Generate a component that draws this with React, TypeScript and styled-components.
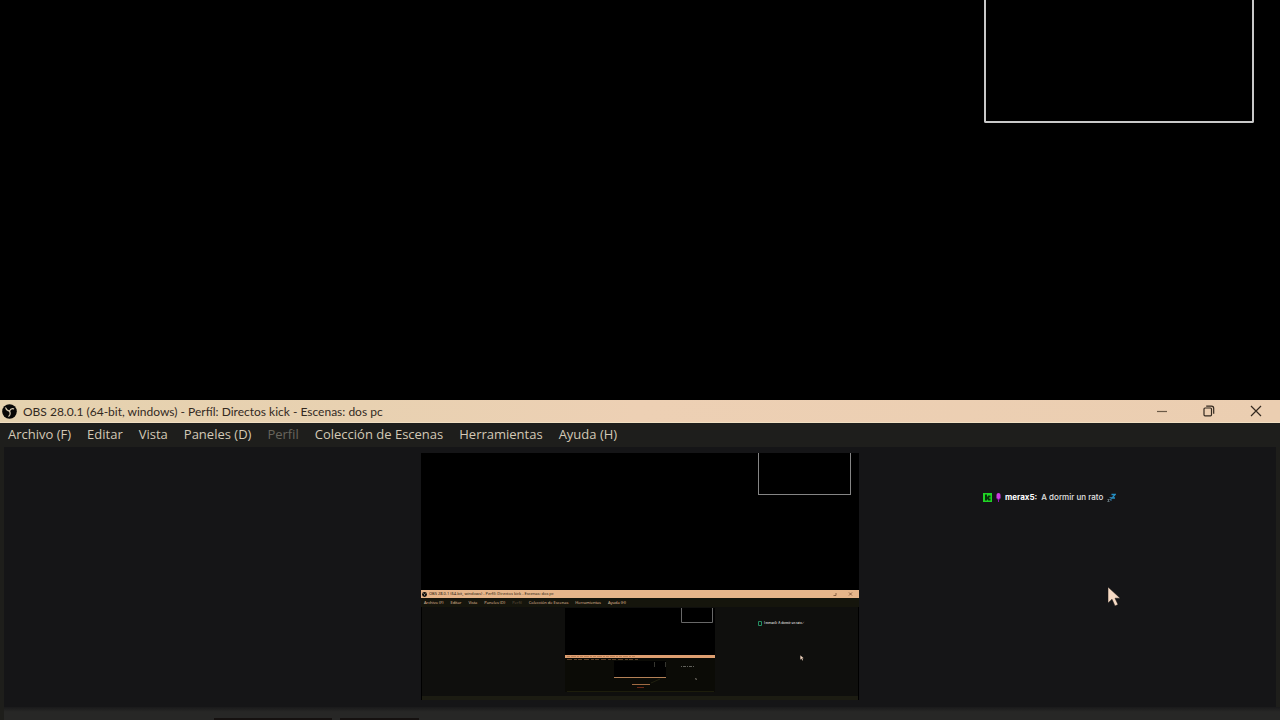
import React from "react";
import styled, { createGlobalStyle } from "styled-components";

const GlobalStyle = createGlobalStyle`
  * { box-sizing: border-box; }
  body { margin: 0; background: #000; overflow: hidden; font-family: "Noto Sans", "Open Sans", sans-serif; }
  button { font: inherit; border: 0; padding: 0; background: none; color: inherit; }
`;

const Page = styled.div`
  position: relative;
  min-height: 100vh;
  display: flex;
  flex-direction: column;
  background: #000;
`;

const Stage = styled.main`
  flex: 1;
  display: flex;
  justify-content: flex-end;
  align-items: flex-start;
  padding-right: 26px;
`;

const SourceFrame = styled.div`
  width: 270px;
  height: 123px;
  border: 2px solid #c9c9c9;
  border-top: 0;
  border-radius: 0 0 2px 2px;
`;

const ObsWindow = styled.section`
  background: #1e1e1b;
`;

const TitleBar = styled.header`
  height: 23px;
  display: flex;
  align-items: center;
  gap: 6px;
  padding: 0 1px 0 2px;
  color: #33291f;
  background: linear-gradient(90deg, #e5d2af 0%, #e8d1b1 28%, #edd0b4 50%, #ebceb1 100%);
  border-bottom: 1px solid #f1dfc2;
`;

const Title = styled.h1`
  flex: 1;
  margin: 0;
  padding-top: 2px;
  font-family: Lato, "Open Sans", sans-serif;
  font-size: 12px;
  line-height: 20px;
  font-weight: 400;
  white-space: nowrap;
`;

const WindowControls = styled.div`
  display: flex;
`;

const WindowButton = styled.button`
  width: 47px;
  height: 22px;
  display: grid;
  place-items: center;
`;

const MenuBar = styled.nav`
  height: 24px;
  display: flex;
  align-items: flex-start;
  gap: 16px;
  padding: 0 8px;
  color: #d4c9b6;
  background: #1e1e1c;
`;

const MenuButton = styled.button<{ $dim?: boolean }>`
  font-family: "Open Sans", sans-serif;
  font-size: 13px;
  line-height: 22px;
  white-space: nowrap;
  color: ${(p) => (p.$dim ? "#69655d" : "inherit")};
`;

const Workspace = styled.div`
  margin: 0 4px;
  height: 260px;
  display: grid;
  grid-template-columns: 1fr 438px 1fr;
  padding-top: 6px;
  background: #151517;
`;

const ChatArea = styled.div`
  grid-column: 3;
  padding: 37px 0 0 124px;
`;

const ChatLine = styled.p`
  margin: 0;
  display: flex;
  align-items: center;
  gap: 4px;
  font: 500 8px/14px Inter, sans-serif;
  color: #e2e2e2;
  white-space: nowrap;
`;

const ChatName = styled.strong`
  font-weight: 700;
  color: #fff;
`;

const DockStrip = styled.footer`
  height: 13px;
  display: flex;
  align-items: flex-end;
  gap: 8px;
  margin-left: 4px;
  padding-left: 210px;
  background: linear-gradient(#1a1a1b, #272726 5px);
`;

const DockEdge = styled.div<{ $width: number }>`
  width: ${(p) => p.$width}px;
  height: 2px;
  background: #151110;
`;

/* Scaled capture of the desktop that the preview shows */
const Capture = styled.div`
  grid-column: 2;
  height: 247px;
  display: flex;
  flex-direction: column;
  background: #000;
`;

const CaptureStage = styled.div`
  height: 137px;
  display: flex;
  justify-content: flex-end;
  align-items: flex-start;
  padding-right: 8px;
`;

const CaptureFrame = styled.div`
  width: 93px;
  height: 42px;
  border: 1px solid #858585;
  border-top: 0;
`;

const CaptureTitle = styled.div`
  height: 8px;
  display: flex;
  align-items: center;
  gap: 2px;
  padding: 0 5px 0 1px;
  background: #e6b58a;
  color: #24160a;
  font-size: 4px;
  line-height: 8px;
  white-space: nowrap;
`;

const CaptureTitleText = styled.span`
  flex: 1;
`;

const CaptureMenu = styled.div`
  height: 9px;
  display: flex;
  align-items: center;
  gap: 7px;
  padding-left: 3px;
  background: #15150c;
  color: #e8c4a0;
  font-family: "Open Sans", sans-serif;
  font-size: 4px;
  line-height: 8px;
  white-space: nowrap;
`;

const CaptureLabel = styled.span<{ $dim?: boolean }>`
  font-weight: 500;
  color: ${(p) => (p.$dim ? "#645743" : "inherit")};
`;

const CaptureBody = styled.div`
  flex: 1;
  display: grid;
  grid-template-columns: 1fr 150px 1fr;
  margin: 0 1px;
  padding-top: 1px;
  background: #0f0f0d;
`;

const CaptureChat = styled.div`
  grid-column: 3;
  display: flex;
  align-items: center;
  gap: 1px;
  height: 6px;
  margin-top: 12px;
  padding-left: 43px;
  color: #ddd;
  font: 600 3px/6px Inter, sans-serif;
  white-space: nowrap;
`;

const CaptureFoot = styled.div`
  height: 4px;
  margin: 0 1px;
  background: #1c1c12;
`;

const NestedArt = styled.svg`
  grid-column: 2;
  display: block;
`;

const Pointer = styled.svg<{ $small?: boolean }>`
  position: absolute;
  left: ${(p) => (p.$small ? "calc(50% + 160px)" : "calc(50% + 467px)")};
  bottom: ${(p) => (p.$small ? 59 : 113)}px;
  pointer-events: none;
`;

const MENUS = ["Archivo (F)", "Editar", "Vista", "Paneles (D)", "Perfil", "Colección de Escenas", "Herramientas", "Ayuda (H)"];
const TITLE = "OBS 28.0.1 (64-bit, windows) - Perfíl: Directos kick - Escenas: dos pc";

const ObsLogo = ({ size }: { size: number }) => (
  <svg width={size} height={size} viewBox="0 0 16 16" aria-hidden="true">
    <circle cx="8" cy="8" r="7.8" fill="#080706" />
    <g fill="none" stroke="#d8cab0" strokeWidth="1.3" strokeLinecap="round">
      <path d="M4 4.200C4.600 6.300 6 7.300 8 7.600" />
      <path d="M12.400 5.200C10.800 4.800 8.800 5.600 8 7.600" />
      <path d="M7.200 13C8.800 11.800 9 9.600 8 7.600" />
    </g>
  </svg>
);

const PointerShape = () => (
  <path d="M1 0v16l4-3.8L8 19l3-1.4-3-6.4h5.2z" fill="#f6dac4" stroke="#1b1714" strokeWidth=".5" />
);

const PreviewCapture = () => (
  <Capture>
    <CaptureStage><CaptureFrame /></CaptureStage>
    <CaptureTitle>
      <ObsLogo size={5} />
      <CaptureTitleText>{TITLE}</CaptureTitleText>
      <svg width="22" height="6" viewBox="0 0 22 6" fill="none" stroke="#714d32" strokeWidth=".8" aria-hidden="true">
        <path d="M1.500 4.500h2.500V2M17 1.500l3 3M20 1.500l-3 3" />
      </svg>
    </CaptureTitle>
    <CaptureMenu>
      {MENUS.map((m) => <CaptureLabel key={m} $dim={m === "Perfil"}>{m}</CaptureLabel>)}
    </CaptureMenu>
    <CaptureBody>
      <NestedArt width="150" height="84" viewBox="0 0 150 84" aria-hidden="true">
        <path fill="#000" d="M0 0h150v47H0z" />
        <path d="M116.500 0v14.500h31V0" fill="none" stroke="#686868" />
        <path fill="#0b0b06" d="M0 49h150v35H0z" />
        <path fill="#dd9e70" d="M0 47h150v3H0z" />
        <path d="M2 48.500h68" stroke="#b98056" strokeWidth="1" strokeDasharray="3 1 5 1 2 1" />
        <path d="M2 51.500h71" stroke="#5c4029" strokeWidth="1" strokeDasharray="5 2 3 1 4 2" />
        <path fill="#000" d="M49 53h52v16H49z" />
        <path d="M89.500 54v5M100.500 54v5" stroke="#35352f" />
        <path d="M49 69.500h52" stroke="#b48157" />
        <path d="M67 76.500h18" stroke="#a06b43" />
        <path d="M72 79.500h7" stroke="#6c2816" />
        <path d="M86 75l9-4" stroke="#20200f" />
        <path d="M116 58.500h13" stroke="#61615a" strokeDasharray="1 1 3 1" />
        <path d="M130 70l2 1-1 1z" fill="#aaa198" />
        <path d="M2 83.500h147" stroke="#1d1d0c" />
      </NestedArt>
      <CaptureChat>
        <svg width="5" height="5" viewBox="0 0 5 5" aria-hidden="true"><path d="M.5.5h3v4h-3z" fill="none" stroke="#258e63" /></svg>
        <span>I merax5: A dormir un rato ⟋</span>
      </CaptureChat>
    </CaptureBody>
    <CaptureFoot />
  </Capture>
);

export default function App() {
  return (
    <Page>
      <GlobalStyle />
      <Stage><SourceFrame /></Stage>
      <ObsWindow>
        <TitleBar>
          <ObsLogo size={15} />
          <Title>{TITLE}</Title>
          <WindowControls>
            <WindowButton aria-label="Minimizar">
              <svg width="12" height="12" viewBox="0 0 12 12"><path d="M1 6.500h10" stroke="#6b5a47" strokeWidth="1.200" /></svg>
            </WindowButton>
            <WindowButton aria-label="Restaurar">
              <svg width="12" height="12" viewBox="0 0 12 12" fill="none" stroke="#33291f" strokeWidth="1.200">
                <rect x="1" y="3" width="7.500" height="7.800" rx="1" />
                <path d="M3.200 1.200h5.300q2.200 0 2.200 2.200v5.400" />
              </svg>
            </WindowButton>
            <WindowButton aria-label="Cerrar">
              <svg width="12" height="12" viewBox="0 0 12 12"><path d="M1 1l10 10M11 1L1 11" stroke="#33291f" strokeWidth="1.200" /></svg>
            </WindowButton>
          </WindowControls>
        </TitleBar>
        <MenuBar>
          {MENUS.map((m) => <MenuButton key={m} $dim={m === "Perfil"}>{m}</MenuButton>)}
        </MenuBar>
        <Workspace>
          <PreviewCapture />
          <ChatArea>
            <ChatLine>
              <svg width="9" height="9" viewBox="0 0 9 9" aria-hidden="true">
                <path fill="#20d325" d="M0 0h9v9H0z" />
                <path fill="#07300a" d="M2 1.500h2v2h1v-1h2.500v2H6v1h1.500v2H5v-1H4v1H2z" />
              </svg>
              <svg width="5" height="9" viewBox="0 0 5 9" aria-hidden="true">
                <rect x=".5" y="0" width="4" height="6.500" rx="2" fill="#cf3be0" />
                <path d="M.5 5Q2.500 8 4.500 5M2.500 6v3" fill="none" stroke="#8c16ad" />
              </svg>
              <ChatName>merax5:</ChatName>
              <span>A dormir un rato</span>
              <svg width="9" height="9" viewBox="0 0 9 9" fill="none" aria-hidden="true">
                <path d="M4.500 1.500h3.700L5 5h3" stroke="#2490c5" strokeWidth="1.300" />
                <path d="M2.500 4.500H5L3 7h2" stroke="#3276a0" />
                <path d="M.5 6.500h1.800L.7 8.500h1.800" stroke="#778991" strokeWidth=".8" />
              </svg>
            </ChatLine>
          </ChatArea>
        </Workspace>
        <DockStrip><DockEdge $width={118} /><DockEdge $width={79} /></DockStrip>
      </ObsWindow>
      <Pointer width="14" height="20" viewBox="0 0 14 20" aria-hidden="true"><PointerShape /></Pointer>
      <Pointer $small width="4" height="6" viewBox="0 0 14 20" aria-hidden="true"><PointerShape /></Pointer>
    </Page>
  );
}
